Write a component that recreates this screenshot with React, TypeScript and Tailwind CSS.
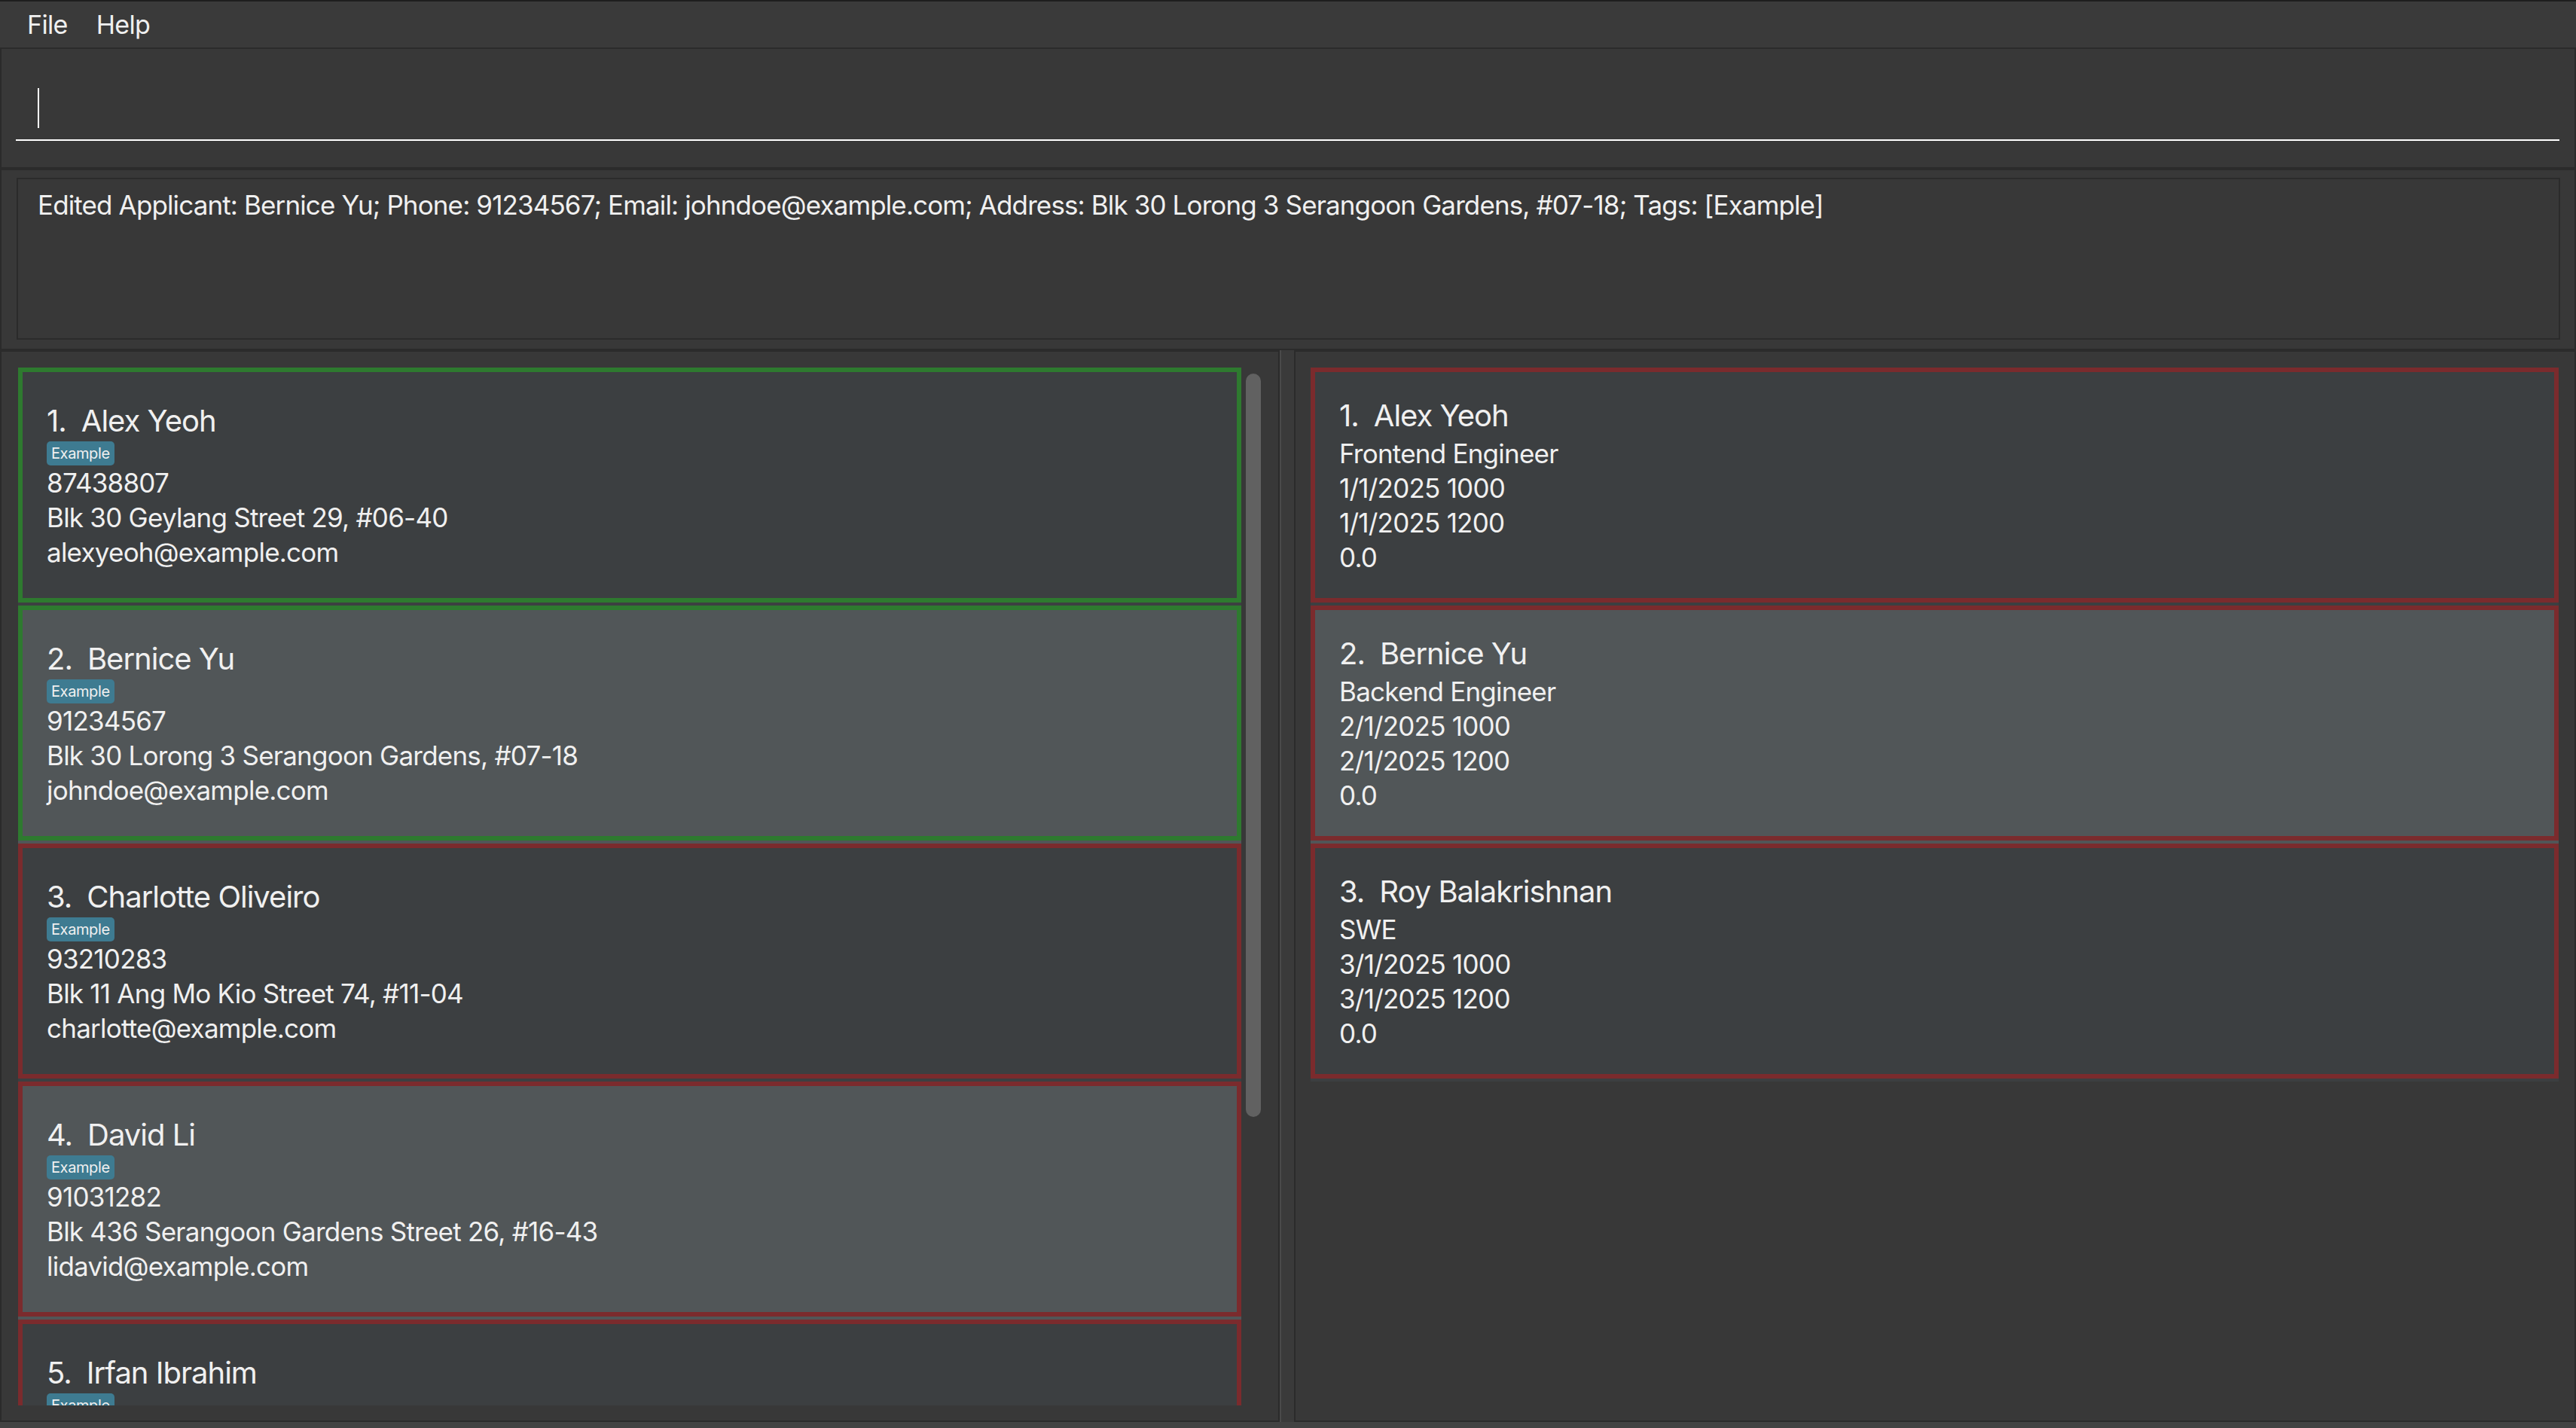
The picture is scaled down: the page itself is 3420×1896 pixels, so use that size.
import React from "react"

const FONT = "font-['Inter','Noto_Sans',sans-serif]"

const applicants = [
  { name: "Alex Yeoh", phone: "87438807", address: "Blk 30 Geylang Street 29, #06-40", email: "alexyeoh@example.com", selected: true },
  { name: "Bernice Yu", phone: "91234567", address: "Blk 30 Lorong 3 Serangoon Gardens, #07-18", email: "johndoe@example.com", selected: true },
  { name: "Charlotte Oliveiro", phone: "93210283", address: "Blk 11 Ang Mo Kio Street 74, #11-04", email: "charlotte@example.com", selected: false },
  { name: "David Li", phone: "91031282", address: "Blk 436 Serangoon Gardens Street 26, #16-43", email: "lidavid@example.com", selected: false },
  { name: "Irfan Ibrahim", phone: "92492021", address: "Blk 47 Tampines Street 20, #17-35", email: "irfan@example.com", selected: false },
]

const interviews = [
  { name: "Alex Yeoh", role: "Frontend Engineer", start: "1/1/2025 1000", end: "1/1/2025 1200", score: "0.0" },
  { name: "Bernice Yu", role: "Backend Engineer", start: "2/1/2025 1000", end: "2/1/2025 1200", score: "0.0" },
  { name: "Roy Balakrishnan", role: "SWE", start: "3/1/2025 1000", end: "3/1/2025 1200", score: "0.0" },
]

function CardTitle({ index, name }: { index: number; name: string }) {
  return (
    <div className="flex text-[40px] leading-[48px] tracking-[-0.025em]">
      <span className="mr-[20px]">{index}.</span>
      <span>{name}</span>
    </div>
  )
}

function ApplicantCard({ a, i }: { a: (typeof applicants)[number]; i: number }) {
  const cell = i % 2 === 0 ? "bg-[#3c3f41]" : "bg-[#515658]"
  const border = a.selected ? "border-[#2e7a2f]" : "border-[#7b2b2d]"
  return (
    <div className={`${cell} pb-[4px] shrink-0`}>
      <div className={`h-[312px] border-[6px] ${border} pl-[32px] pt-[41px]`}>
        <CardTitle index={i + 1} name={a.name} />
        <div className="flex mt-[3px]">
          <span className="h-[32px] px-[6px] rounded-[5px] bg-[#3e7b91] text-[20px] leading-[32px] tracking-[-0.02em]">Example</span>
        </div>
        <div className="text-[35px] leading-[46px] tracking-[-0.022em]">
          <div>{a.phone}</div>
          <div>{a.address}</div>
          <div>{a.email}</div>
        </div>
      </div>
    </div>
  )
}

function InterviewCard({ v, i }: { v: (typeof interviews)[number]; i: number }) {
  const cell = i % 2 === 0 ? "bg-[#3c3f41]" : "bg-[#515658]"
  return (
    <div className={`${cell} pb-[4px] shrink-0`}>
      <div className="h-[312px] border-[6px] border-[#7b2b2d] pl-[32px] pt-[34px]">
        <CardTitle index={i + 1} name={v.name} />
        <div className="text-[35px] leading-[46px] mt-[3px] tracking-[-0.022em]">
          <div>{v.role}</div>
          <div>{v.start}</div>
          <div>{v.end}</div>
          <div>{v.score}</div>
        </div>
      </div>
    </div>
  )
}

export default function App() {
  return (
    <div className={`${FONT} w-[3420px] h-[1896px] bg-[#383838] text-[#f0f0f0] flex flex-col overflow-hidden`}>
      {/* menu bar */}
      <div className="h-[65px] shrink-0 border-t-2 border-b-2 border-t-[#1e1e1e] border-b-[#2b2b2b] bg-[#3a3a3a] flex items-center pl-[36px] gap-[38px] text-[34px] tracking-[-0.02em]">
        <span>File</span>
        <span>Help</span>
      </div>

      {/* command box */}
      <div className="h-[159px] shrink-0 border-x-2 border-b-2 border-[#2b2b2b] pl-[19px] pr-[20px] pt-[33px]">
        <div className="h-[89px] border-b-2 border-white flex items-end">
          <div className="w-[2px] h-[53px] bg-white ml-[29px] mb-[15px]" />
        </div>
      </div>

      {/* result display */}
      <div className="h-[241px] shrink-0 border-2 border-[#2b2b2b] pl-[20px] pr-[19px] pt-[10px] pb-[12px]">
        <div className="h-full border-2 border-[#2b2b2b] pl-[26px] pt-[11px] text-[35px] leading-[46px] tracking-[-0.025em]">
          Edited Applicant: Bernice Yu; Phone: 91234567; Email: johndoe@example.com; Address: Blk 30 Lorong 3 Serangoon Gardens, #07-18; Tags: [Example]
        </div>
      </div>

      {/* lists */}
      <div className="flex-1 min-h-0 flex">
        <div className="w-[1699px] shrink-0 border-2 border-[#2b2b2b] flex pl-[22px] pt-[21px] pb-[20px]">
          <div className="w-[1624px] shrink-0 overflow-hidden flex flex-col">
            {applicants.map((a, i) => (
              <ApplicantCard key={a.name} a={a} i={i} />
            ))}
          </div>
          <div className="ml-[6px] w-[20px] pt-[8px]">
            <div className="h-[987px] rounded-[10px] bg-[#616161]" />
          </div>
        </div>
        <div className="w-[19px] shrink-0 border-l-2 border-[#4a4a4a] bg-[#3a3a3a]" />
        <div className="flex-1 border-2 border-[#2b2b2b] pl-[20px] pr-[21px] pt-[21px] flex flex-col">
          {interviews.map((v, i) => (
            <InterviewCard key={v.name} v={v} i={i} />
          ))}
        </div>
      </div>

      {/* status strip */}
      <div className="h-[8px] shrink-0 bg-[#424242]" />
    </div>
  )
}
